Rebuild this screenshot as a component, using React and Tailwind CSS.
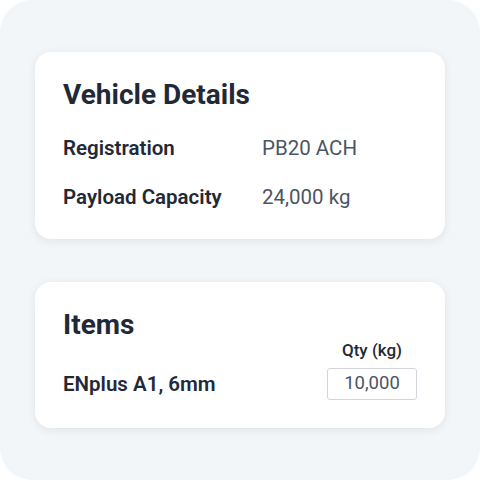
import React from "react";

const rows = [
    { label: "Registration", value: "PB20 ACH" },
    { label: "Payload Capacity", value: "24,000 kg" },
];

const Card = ({ children, className = "" }) => (
    <div
        className={`bg-white rounded-2xl shadow-[0_2px_10px_rgba(15,23,42,0.08)] px-7 ${className}`}
    >
        {children}
    </div>
);

export default function App() {
    return (
        <div className="w-[480px] h-[480px] bg-white">
            <div
                className="w-full h-full rounded-[32px] bg-[#f3f6f8] px-[35px] pt-[52px] flex flex-col gap-[43px] text-[#1f2937]"
                style={{ fontFamily: "Roboto, 'Noto Sans', sans-serif" }}
            >
                {/* vehicle card */}
                <Card className="pt-[26px] pb-[28px]">
                    <h2 className="text-[28px] leading-[34px] font-bold">Vehicle Details</h2>
                    <div className="mt-[22px] flex flex-col gap-[21px]">
                        {rows.map((r) => (
                            <div key={r.label} className="flex text-[20.5px] leading-[28px]">
                                <span className="w-[199px] font-semibold">{r.label}</span>
                                <span className="text-[#4b5563]">{r.value}</span>
                            </div>
                        ))}
                    </div>
                </Card>

                {/* items card */}
                <Card className="pt-[26px] pb-[28px]">
                    <h2 className="text-[28px] leading-[34px] font-bold">Items</h2>
                    <div className="-mt-[2px] flex justify-between items-end">
                        <div className="h-8 flex items-center text-[20.5px] font-semibold">
                            ENplus A1, 6mm
                        </div>
                        <div className="flex flex-col items-center">
                            <span className="text-[17px] leading-[20px] font-medium">Qty (kg)</span>
                            <div className="mt-[8px] w-[90px] h-8 border border-[#d1d5db] rounded-[3px] flex items-center justify-center text-[18.5px] text-[#4b5563]">
                                10,000
                            </div>
                        </div>
                    </div>
                </Card>
            </div>
        </div>
    );
}
